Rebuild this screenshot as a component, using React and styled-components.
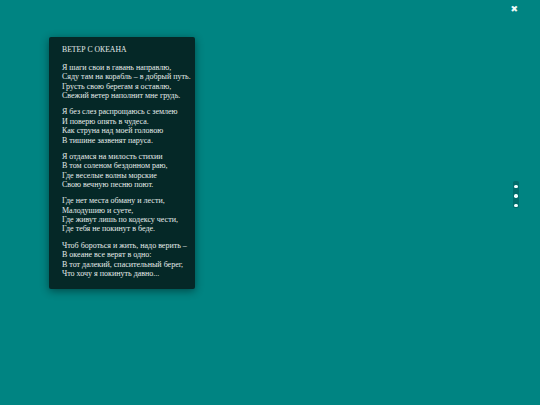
import React from "react";
import styled, { createGlobalStyle } from "styled-components";

const Global = createGlobalStyle`
  html, body { margin: 0; padding: 0; }
  body {
    width: 540px;
    height: 405px;
    background: #008482;
    overflow: hidden;
    font-family: "Liberation Serif", "Times New Roman", serif;
  }
`;

const Page = styled.div`
  position: relative;
  width: 540px;
  height: 405px;
  padding: 37px 0 0 49px;
  box-sizing: border-box;
`;

const Card = styled.article`
  width: 146px;
  height: 252px;
  box-sizing: border-box;
  padding: 8px 4px 0 13px;
  background: #052827;
  box-shadow: 0 2px 8px rgba(0, 0, 0, 0.45);
  border-radius: 2px;
  color: #e6eceb;
  font-size: 8px;
  line-height: 9.35px;
`;

const Title = styled.h1`
  margin: 0 0 8px;
  font-weight: normal;
  font-size: 7.7px;
  line-height: 10px;
`;

const Stanza = styled.p`
  margin: 0 0 7.1px;
  white-space: pre;
`;

const Close = styled.button`
  position: absolute;
  top: 4px;
  right: 22px;
  border: 0;
  background: none;
  padding: 0;
  color: #f0fafa;
  font-size: 9px;
  line-height: 10px;
  font-family: "DejaVu Sans", sans-serif;
  cursor: pointer;
`;

const Dots = styled.div`
  position: absolute;
  top: 181px;
  right: 21px;
  width: 6px;
  height: 27px;
  box-sizing: border-box;
  padding-top: 4px;
  display: flex;
  flex-direction: column;
  align-items: center;
  gap: 6px;
  background: #006c6b;
  border-radius: 2px;
`;

const Dot = styled.span`
  width: 3.4px;
  height: 3.4px;
  border-radius: 50%;
  background: #f2ffff;
`;

const stanzas = [
  "Я шаги свои в гавань направлю,\nСяду там на корабль – в добрый путь.\nГрусть свою берегам я оставлю,\nСвежий ветер наполнит мне грудь.",
  "Я без слез распрощаюсь с землею\nИ поверю опять в чудеса.\nКак струна над моей головою\nВ тишине зазвенят паруса.",
  "Я отдамся на милость стихии\nВ том соленом бездонном раю,\nГде веселые волны морские\nСвою вечную песню поют.",
  "Где нет места обману и лести,\nМалодушию и суете,\nГде живут лишь по кодексу чести,\nГде тебя не покинут в беде.",
  "Чтоб бороться и жить, надо верить –\nВ океане все верят в одно:\nВ тот далекий, спасительный берег,\nЧто хочу я покинуть давно...",
];

export default function App() {
  return (
    <>
      <Global />
      <Page>
        <Card>
          <Title>ВЕТЕР С ОКЕАНА</Title>
          {stanzas.map((s, i) => (
            <Stanza key={i}>{s}</Stanza>
          ))}
        </Card>
        <Close aria-label="close">✖</Close>
        <Dots>
          <Dot />
          <Dot />
          <Dot />
        </Dots>
      </Page>
    </>
  );
}
